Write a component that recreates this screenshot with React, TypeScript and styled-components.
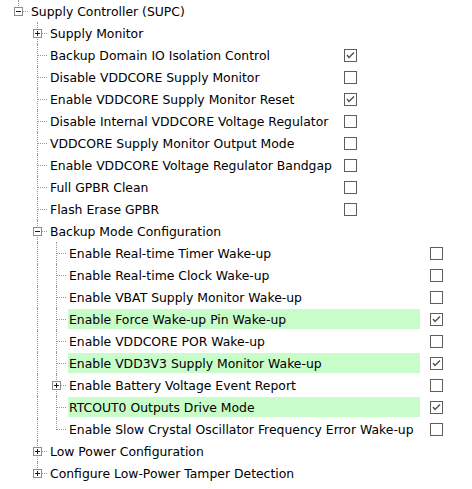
import React from "react";
import styled, { createGlobalStyle, css } from "styled-components";

const GlobalStyle = createGlobalStyle`
  html, body { margin: 0; padding: 0; background: #ffffff; }
  body { font-family: "DejaVu Sans", Verdana, sans-serif; font-size: 12.4px; color: #000; }
`;

type TreeNode = {
  label: string;
  checked?: boolean;
  highlight?: boolean;
  expanded?: boolean;
  hasChildren?: boolean;
  checkbox?: boolean;
  children?: TreeNode[];
};

const leaf = (label: string, checked = false, highlight = false): TreeNode => ({
  label,
  checked,
  highlight,
  checkbox: true,
});

const data: TreeNode = {
  label: "Supply Controller (SUPC)",
  expanded: true,
  hasChildren: true,
  children: [
    { label: "Supply Monitor", hasChildren: true },
    leaf("Backup Domain IO Isolation Control", true),
    leaf("Disable VDDCORE Supply Monitor"),
    leaf("Enable VDDCORE Supply Monitor Reset", true),
    leaf("Disable Internal VDDCORE Voltage Regulator"),
    leaf("VDDCORE Supply Monitor Output Mode"),
    leaf("Enable VDDCORE Voltage Regulator Bandgap"),
    leaf("Full GPBR Clean"),
    leaf("Flash Erase GPBR"),
    {
      label: "Backup Mode Configuration",
      expanded: true,
      hasChildren: true,
      children: [
        leaf("Enable Real-time Timer Wake-up"),
        leaf("Enable Real-time Clock Wake-up"),
        leaf("Enable VBAT Supply Monitor Wake-up"),
        leaf("Enable Force Wake-up Pin Wake-up", true, true),
        leaf("Enable VDDCORE POR Wake-up"),
        leaf("Enable VDD3V3 Supply Monitor Wake-up", true, true),
        { ...leaf("Enable Battery Voltage Event Report"), hasChildren: true },
        leaf("RTCOUT0 Outputs Drive Mode", true, true),
        leaf("Enable Slow Crystal Oscillator Frequency Error Wake-up"),
      ],
    },
    { label: "Low Power Configuration", hasChildren: true },
    { label: "Configure Low-Power Tamper Detection", hasChildren: true },
  ],
};

const labelWidths: Record<number, number> = { 1: 285, 2: 352 };

type GuideKind = "pipe" | "tee" | "elbow" | "blank";

type FlatRow = {
  node: TreeNode;
  depth: number;
  guides: GuideKind[];
};

function flatten(node: TreeNode, depth: number, ancestorsMore: boolean[], isLast: boolean, out: FlatRow[]) {
  const guides: GuideKind[] = ancestorsMore.map((more) => (more ? "pipe" : "blank"));
  guides.push(isLast ? "elbow" : "tee");
  out.push({ node, depth, guides });
  if (node.expanded && node.children) {
    node.children.forEach((child, i) => {
      flatten(child, depth + 1, [...ancestorsMore, !isLast], i === node.children!.length - 1, out);
    });
  }
}

const TreeView = styled.div`
  display: flex;
  flex-direction: column;
  padding-left: 9px;
  user-select: none;
`;

const Row = styled.div`
  display: flex;
  align-items: center;
  height: 22px;
`;

const dotted = "#9a9a9a";

const Guide = styled.div<{ $kind: GuideKind }>`
  position: relative;
  flex: 0 0 19px;
  width: 19px;
  height: 22px;

  ${({ $kind }) =>
    ($kind === "pipe" || $kind === "tee" || $kind === "elbow") &&
    css`
      &::before {
        content: "";
        position: absolute;
        left: 9px;
        top: 0;
        height: ${$kind === "elbow" ? "12px" : "22px"};
        border-left: 1px dotted ${dotted};
      }
    `}

  ${({ $kind }) =>
    ($kind === "tee" || $kind === "elbow") &&
    css`
      &::after {
        content: "";
        position: absolute;
        left: 10px;
        top: 11px;
        width: 9px;
        border-top: 1px dotted ${dotted};
      }
    `}
`;

const Expander = styled.span`
  position: absolute;
  left: 5px;
  top: 7px;
  width: 7px;
  height: 7px;
  border: 1px solid #8c8c8c;
  background: #ffffff;
  z-index: 1;
  display: flex;
  align-items: center;
  justify-content: center;
`;

const Sign = styled.span<{ $open: boolean }>`
  position: relative;
  width: 5px;
  height: 5px;
  &::before {
    content: "";
    position: absolute;
    left: 0;
    top: 2px;
    width: 5px;
    height: 1px;
    background: #1a1a1a;
  }
  ${({ $open }) =>
    !$open &&
    css`
      &::after {
        content: "";
        position: absolute;
        left: 2px;
        top: 0;
        width: 1px;
        height: 5px;
        background: #1a1a1a;
      }
    `}
`;

const Label = styled.span<{ $width?: number; $highlight?: boolean }>`
  display: flex;
  align-items: center;
  box-sizing: border-box;
  height: 20px;
  margin-left: 2px;
  padding-left: 1px;
  white-space: nowrap;
  ${({ $width }) => ($width ? `width: ${$width}px;` : "")}
  background: ${({ $highlight }) => ($highlight ? "#c8fcc8" : "transparent")};
`;

const CheckBox = styled.span`
  box-sizing: border-box;
  margin-left: 10px;
  width: 13px;
  height: 13px;
  border: 1px solid #5e5e5e;
  background: #ffffff;
  display: flex;
  align-items: center;
  justify-content: center;
`;

const CheckMark = () => (
  <svg width="11" height="11" viewBox="0 0 11 11">
    <polyline points="2,5 4,7.5 9,2.5" fill="none" stroke="#4a4a4a" strokeWidth="1.3" />
  </svg>
);

export default function App() {
  const rows: FlatRow[] = [];
  flatten(data, 0, [], true, rows);
  return (
    <>
      <GlobalStyle />
      <TreeView>
        {rows.map(({ node, depth, guides }, idx) => (
          <Row key={idx}>
            {guides.map((g, gi) => (
              <Guide key={gi} $kind={g}>
                {gi === depth && node.hasChildren && (
                  <Expander>
                    <Sign $open={!!node.expanded} />
                  </Expander>
                )}
              </Guide>
            ))}
            <Label $width={node.checkbox ? labelWidths[depth] : undefined} $highlight={node.highlight}>
              {node.label}
            </Label>
            {node.checkbox && <CheckBox>{node.checked && <CheckMark />}</CheckBox>}
          </Row>
        ))}
      </TreeView>
    </>
  );
}
